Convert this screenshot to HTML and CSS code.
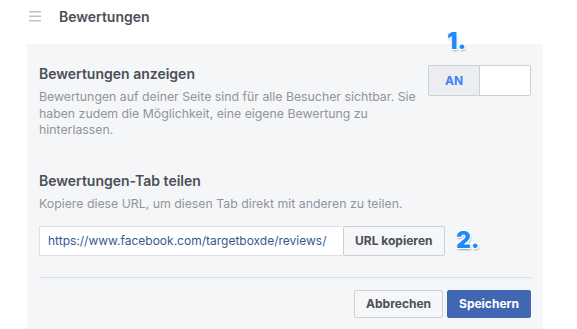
FILE: index.html
```html
<!DOCTYPE html>
<html lang="de">
<head>
  <meta charset="UTF-8">
  <title>Bewertungen</title>
  <link rel="stylesheet" href="styles.css">
</head>
<body>
  <div class="header">
    <svg class="menu-icon" width="12" height="12" viewBox="0 0 12 12">
      <rect x="0" y="1" width="12" height="1.5" fill="#bec2c9"/>
      <rect x="0" y="5.5" width="12" height="1.5" fill="#bec2c9"/>
      <rect x="0" y="10" width="12" height="1.5" fill="#bec2c9"/>
    </svg>
    <span class="title">Bewertungen</span>
  </div>

  <div class="panel">
    <div class="section first">
      <div class="section-text">
        <h3>Bewertungen anzeigen</h3>
        <p>Bewertungen auf deiner Seite sind für alle Besucher sichtbar. Sie haben zudem die Möglichkeit, eine eigene Bewertung zu hinterlassen.</p>
      </div>
      <div class="toggle">
        <span class="toggle-on">AN</span>
        <span class="toggle-off"></span>
        <span class="marker marker-1">1.</span>
      </div>
    </div>

    <div class="section">
      <div class="section-text">
        <h3>Bewertungen-Tab teilen</h3>
        <p>Kopiere diese URL, um diesen Tab direkt mit anderen zu teilen.</p>
        <div class="url-row">
          <input class="url-input" type="text" value="https://www.facebook.com/targetboxde/reviews/" readonly>
          <button class="btn">URL kopieren</button>
          <span class="marker marker-2">2.</span>
        </div>
      </div>
    </div>

    <div class="footer">
      <button class="btn">Abbrechen</button>
      <button class="btn primary">Speichern</button>
    </div>
  </div>
</body>
</html>
```

FILE: styles.css
```css
body {
  margin: 0;
  background-color: #fff;
  font-family: Inter, "Liberation Sans", sans-serif;
  color: #4b4f56;
}

.header {
  display: flex;
  align-items: center;
  height: 32px;
  padding-left: 29px;
}

.menu-icon {
  margin-right: 18px;
}

.title {
  font-size: 14px;
  font-weight: 600;
  color: #4b4f56;
}

.panel {
  margin: 12px 34px 0 27px;
  background-color: #f5f6f7;
  padding: 0 12px;
  height: 285px;
}

.section {
  display: flex;
  justify-content: space-between;
  padding-top: 21px;
}

.section.first {
  height: 107px;
  box-sizing: border-box;
}

.section-text h3 {
  margin: 0 0 7px 0;
  font-size: 14px;
  font-weight: 600;
  color: #4b4f56;
}

.section-text p {
  margin: 0;
  font-size: 12.3px;
  line-height: 16.5px;
  color: #90949c;
  width: 380px;
}

.toggle {
  position: relative;
  display: flex;
  width: 101px;
  height: 29px;
  border: 1px solid #ccd0d5;
  border-radius: 2px;
  background-color: #fff;
}

.toggle-on {
  width: 50px;
  background-color: #ebedf0;
  border-right: 1px solid #ccd0d5;
  color: #4080ff;
  font-size: 12px;
  font-weight: 700;
  display: flex;
  align-items: center;
  justify-content: center;
}

.marker {
  position: absolute;
  color: #1d8cf8;
  font-size: 23px;
  font-weight: 900;
  line-height: 1;
  text-shadow: 1px 1px 0 #fff, -1px -1px 0 #fff, 1px -1px 0 #fff, -1px 1px 0 #fff, 1px 2px 2px rgba(0, 0, 0, 0.35);
}

.marker-1 {
  top: -36px;
  left: 18px;
}

.url-row {
  position: relative;
  display: flex;
  margin-top: 13px;
}

.url-input {
  width: 304px;
  height: 30px;
  box-sizing: border-box;
  border: 1px solid #dddfe2;
  border-right: none;
  padding: 0 8px;
  font-family: inherit;
  font-size: 12px;
  color: #365899;
  background-color: #fff;
  outline: none;
}

.btn {
  height: 30px;
  box-sizing: border-box;
  border: 1px solid #ccd0d5;
  border-radius: 2px;
  background-color: #f5f6f7;
  color: #4b4f56;
  font-family: inherit;
  font-size: 12px;
  font-weight: 700;
  padding: 0 11px;
}

.marker-2 {
  top: 3px;
  left: 417px;
}

.footer {
  display: flex;
  justify-content: flex-end;
  gap: 4px;
  margin-top: 21px;
  padding-top: 12px;
  border-top: 1px solid #dadde1;
}

.footer .btn {
  height: 28px;
}

.btn.primary {
  background-color: #4267b2;
  border-color: #4267b2;
  color: #fff;
}
```
